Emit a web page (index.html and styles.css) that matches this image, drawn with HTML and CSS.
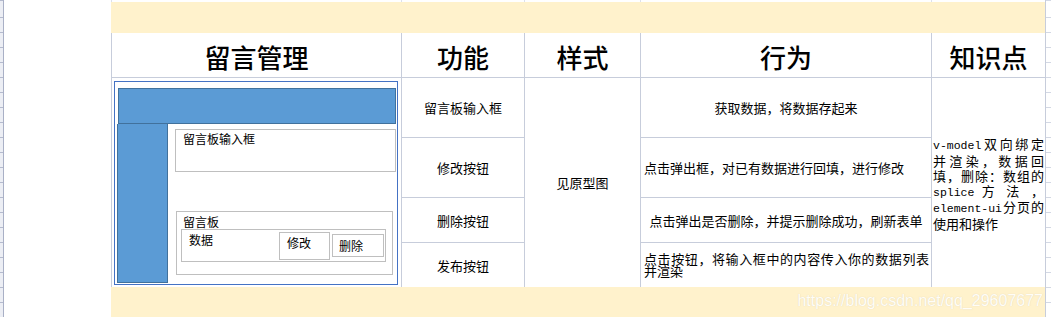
FILE: index.html
```html
<!DOCTYPE html>
<html lang="zh-CN">
<head>
<meta charset="utf-8">
<title>留言管理</title>
<link rel="stylesheet" href="styles.css">
</head>
<body>
<div class="sheet">
  <div class="rowhdr"></div>
  <div class="gutter"></div>
  <div class="main">
    <div class="topstrip"><div></div><div></div><div></div><div></div><div></div></div>
    <div class="band band-top"></div>
    <div class="grid">
      <div class="cell head">留言管理</div>
      <div class="cell head">功能</div>
      <div class="cell head">样式</div>
      <div class="cell head">行为</div>
      <div class="cell head">知识点</div>

      <div class="proto-cell span4">
        <div class="proto">
          <div class="pbar"></div>
          <div class="pbody">
            <div class="pside"></div>
            <div class="pcontent">
              <div class="pinput">留言板输入框</div>
              <div class="pboard">
                <div class="pboard-title">留言板</div>
                <div class="prow">
                  <div class="plabel">数据</div>
                  <div class="pbtn pbtn-edit">修改</div>
                  <div class="pbtn pbtn-del">删除</div>
                </div>
              </div>
            </div>
          </div>
        </div>
      </div>
      <div class="cell">留言板输入框</div>
      <div class="cell span4">见原型图</div>
      <div class="cell">获取数据，将数据存起来</div>
      <div class="cell knowledge span4">
        <div class="lines">
          <span class="kl"><span class="mono">v-model</span>双向绑定</span>
          <span class="kl">并渲染，数据回</span>
          <span class="kl">填，删除：数组的</span>
          <span class="kl"><span class="mono">splice</span> 方 法 ，</span>
          <span class="kl"><span class="mono">element-ui</span>分页的</span>
          <span class="kl last">使用和操作</span>
        </div>
      </div>

      <div class="cell">修改按钮</div>
      <div class="cell left">点击弹出框，对已有数据进行回填，进行修改</div>

      <div class="cell">删除按钮</div>
      <div class="cell">点击弹出是否删除，并提示删除成功，刷新表单</div>

      <div class="cell">发布按钮</div>
      <div class="cell justify"><p>点击按钮，将输入框中的内容传入你的数据列表并渲染</p></div>
    </div>
    <div class="band band-bottom"><span class="watermark">https://blog.csdn.net/qq_29607677</span></div>
  </div>
  <div class="rightcol"></div>
</div>
</body>
</html>
```
FILE: styles.css
```css
* { box-sizing: border-box; }

body {
  margin: 0;
  width: 1051px;
  height: 317px;
  overflow: hidden;
  background: #fff;
  color: #000;
  font-family: "Noto Sans CJK SC", sans-serif;
}

.sheet {
  display: flex;
  height: 317px;
}

.rowhdr {
  width: 4px;
  border-right: 1px solid #a9b0c6;
  background: repeating-linear-gradient(to bottom, #eceef4 0 14px, #b4bace 14px 15px);
  background-position: 0 3px;
}

.gutter { width: 107px; }

.main {
  width: 934px;
  display: flex;
  flex-direction: column;
}

.rightcol {
  width: 6px;
  border-left: 1px solid #c7cddb;
  background: repeating-linear-gradient(to bottom, #fff 0 14px, #d3d8e4 14px 15px);
  background-position: 0 3px;
}

.topstrip {
  height: 2px;
  display: grid;
  grid-template-columns: 289px 122px 115px 290px 113px;
  column-gap: 1px;
  padding-left: 1px;
  background: #dde1ea;
}
.topstrip > div { background: #fff; }

.band { background: #fff2cc; }
.band-top { height: 31px; }
.band-bottom {
  height: 30px;
  text-align: right;
  padding-right: 2px;
}
.watermark {
  font-family: "Liberation Sans", sans-serif;
  font-size: 16px;
  line-height: 24px;
  color: #fffdf7;
  text-shadow: 0 0 1px rgba(200, 190, 160, 0.6);
}

.grid {
  display: grid;
  grid-template-columns: 289px 122px 115px 290px 113px;
  grid-template-rows: 44px 59px 59px 44px 44px;
  gap: 1px;
  height: 254px;
  background: #c7cddb;
  border-left: 1px solid #c7cddb;
}
.grid > div { background: #fff; }

.cell {
  display: flex;
  align-items: center;
  justify-content: center;
  font-size: 13px;
  line-height: 15px;
}

.head {
  font-size: 26px;
  line-height: 34px;
  font-weight: 500;
  padding-top: 4px;
}

.span4 { grid-row: span 4; }

.left {
  justify-content: flex-start;
  padding-left: 3px;
}

.justify { padding: 0 2px 0 3px; }
.justify p {
  margin: 0;
  width: 100%;
  text-align: justify;
  line-height: 12.5px;
}

.knowledge { padding: 0 1px; }
.knowledge .lines {
  width: 100%;
  line-height: 14.7px;
  padding-top: 4px;
}
.kl {
  display: block;
  text-align: justify;
  text-align-last: justify;
}
.kl.last { text-align-last: auto; }
.mono {
  font-family: "Liberation Mono", monospace;
  font-size: 11.5px;
}

/* prototype drawing */
.proto-cell {
  display: flex;
  padding: 3px 3px 2px 2px;
}
.proto {
  flex: 1;
  display: flex;
  flex-direction: column;
  border: 1px solid #4472c4;
  padding: 6px 0 1px;
  font-size: 12px;
  line-height: 14px;
}
.pbar {
  flex: none;
  height: 36px;
  margin: 0 1px 0 3px;
  background: #5b9bd5;
  border: 1px solid #41719c;
}
.pbody {
  flex: 1;
  display: flex;
}
.pside {
  width: 51px;
  margin-left: 2px;
  background: #5b9bd5;
  border: 1px solid #41719c;
  border-top: 0;
}
.pcontent {
  flex: 1;
  display: flex;
  flex-direction: column;
  padding: 0 1px 0 7px;
}
.pinput {
  height: 43px;
  margin-top: 5px;
  border: 1px solid #bfbfbf;
  padding: 2px 7px;
}
.pboard {
  height: 64px;
  margin: 39px 3px 0 1px;
  border: 1px solid #bfbfbf;
}
.pboard-title {
  height: 17px;
  padding: 3px 0 0 6px;
}
.prow {
  width: 205px;
  height: 33px;
  margin-left: 4px;
  border: 1px solid #bfbfbf;
  display: flex;
  align-items: flex-start;
}
.plabel {
  flex: 1;
  padding: 3px 0 0 7px;
}
.pbtn { border: 1px solid #bfbfbf; }
.pbtn-edit {
  width: 51px;
  height: 28px;
  margin-top: 2px;
  padding: 3px 0 0 7px;
}
.pbtn-del {
  width: 52px;
  height: 23px;
  margin: 4px 1px 0 2px;
  padding: 4px 0 0 6px;
}
```
